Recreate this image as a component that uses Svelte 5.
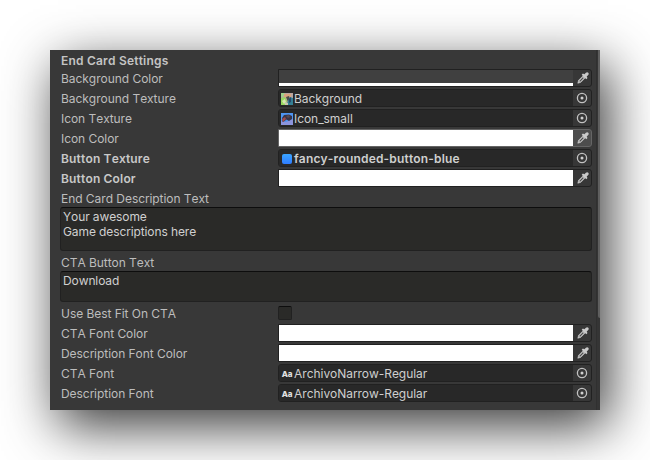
<script>
  const topRows = [
    { label: 'Background Color', kind: 'color', color: '#404040', alpha: true },
    { label: 'Background Texture', kind: 'object', icon: 'scene', value: 'Background' },
    { label: 'Icon Texture', kind: 'object', icon: 'bird', value: 'Icon_small' },
    { label: 'Icon Color', kind: 'color', color: '#ffffff', active: true },
    { label: 'Button Texture', kind: 'object', icon: 'button', value: 'fancy-rounded-button-blue', bold: true },
    { label: 'Button Color', kind: 'color', color: '#ffffff', bold: true }
  ];
  const bottomRows = [
    { label: 'Use Best Fit On CTA', kind: 'toggle' },
    { label: 'CTA Font Color', kind: 'color', color: '#ffffff' },
    { label: 'Description Font Color', kind: 'color', color: '#ffffff' },
    { label: 'CTA Font', kind: 'object', icon: 'font', value: 'ArchivoNarrow-Regular' },
    { label: 'Description Font', kind: 'object', icon: 'font', value: 'ArchivoNarrow-Regular' }
  ];
</script>

{#snippet icon(name)}
  <svg class="icon" viewBox="0 0 12 12">
    {#if name === 'scene'}
      <rect width="12" height="12" fill="#b9a6a0" />
      <path d="M0 0h4L2 4H0z" fill="#9ed089" />
      <path d="M3 1h7v3L6 5 3 4z" fill="#d9a37c" />
      <path d="M0 5l4-1 2 4-2 4H0z" fill="#96d860" />
      <path d="M1 8l3-2 1 3-2 2z" fill="#d8e8b0" />
      <path d="M5 4l3-1 1 3-2 3z" fill="#4b4e48" />
      <path d="M9 4l3 1v7H5l2-4z" fill="#347f94" />
      <path d="M8 6l2-2v5l-2 1z" fill="#29486a" />
      <path d="M4 9l3 1v2H4z" fill="#c9c8ae" />
    {:else if name === 'bird'}
      <rect width="12" height="12" fill="#4e95f2" />
      <path d="M0 8l5 1 7-3v6H0z" fill="#8c94dd" />
      <path d="M1 5l2-3 5-.5 3 1.5v3L8 8 5.500 6.500 3 8.500 1.500 9z" fill="#39364a" />
      <path d="M1 6l3-2 1 2-3 3z" fill="#a34b4b" />
      <path d="M5 3l3-1 1 2-2 1z" fill="#5b4a50" />
    {:else if name === 'button'}
      <defs>
        <linearGradient id="blue" x2="0" y2="1">
          <stop stop-color="#3aa5ff" /><stop offset="1" stop-color="#2f7cff" />
        </linearGradient>
      </defs>
      <rect x="1" y="1" width="10" height="10" rx="2" fill="url(#blue)" />
    {/if}
  </svg>
{/snippet}

{#snippet row(r)}
  <div class="row" class:bold={r.bold}>
    <span class="label">{r.label}</span>
    {#if r.kind === 'color'}
      <div class="field color" class:active={r.active}>
        <div class="swatch" style:background={r.color}>
          {#if r.alpha}<i></i>{/if}
        </div>
        <svg class="tool" viewBox="0 0 18 16">
          <path d="M4.800 13.200l.9-3 4.500-4.500 2.100 2.100-4.500 4.500z" fill="#c6c6c6" stroke="#c6c6c6" stroke-width=".7" stroke-linejoin="round" />
          <path d="M6.700 11.300L10.300 7.700" stroke="#4a4a4a" stroke-width="1.200" />
          <path d="M8.700 4.700l1.200-1.200 1.500.8 1.500-1.500q1.300-1.200 2.400-.1 1.100 1.100-.1 2.400l-1.500 1.500.8 1.500-1.200 1.200z" fill="#cacaca" />
        </svg>
      </div>
    {:else if r.kind === 'object'}
      <div class="field object">
        <div class="value">
          {#if r.icon === 'font'}<b class="aa">Aa</b>{:else}{@render icon(r.icon)}{/if}
          <span>{r.value}</span>
        </div>
        <svg class="tool" viewBox="0 0 18 16">
          <circle cx="9" cy="8" r="4.600" fill="none" stroke="#c2c2c2" stroke-width="1.300" />
          <circle cx="9" cy="8" r="1.500" fill="#d0d0d0" />
        </svg>
      </div>
    {:else}
      <div class="toggle"></div>
    {/if}
  </div>
{/snippet}

<main>
  <section class="panel">
    <div class="content">
      <h2>End Card Settings</h2>
      {#each topRows as r}{@render row(r)}{/each}
      <span class="label">End Card Description Text</span>
      <div class="area tall">Your awesome<br />Game descriptions here</div>
      <span class="label">CTA Button Text</span>
      <div class="area">Download</div>
      {#each bottomRows as r}{@render row(r)}{/each}
    </div>
    <div class="scroll"><div class="thumb"></div></div>
  </section>
</main>

<style>
  :global(body) { background: #fff; }
  main {
    box-sizing: border-box;
    width: 650px;
    height: 460px;
    padding: 50px;
    overflow: hidden;
    font: 12px/18px Inter, sans-serif;
    font-kerning: none;
    letter-spacing: -0.05px;
    color: #bdbdbd;
  }
  .panel {
    display: flex;
    width: 550px;
    height: 360px;
    background: #383838;
    box-shadow: 8px 16px 50px rgba(0, 0, 0, 0.79);
  }
  .content { width: 532px; padding: 0 4px 0 10px; }
  h2 {
    height: 19px;
    margin: 0 0 0 1px;
    font-size: 12px;
    line-height: 22px;
    font-weight: 600;
    letter-spacing: 0.2px;
    color: #c4c4c4;
  }
  .row { display: flex; height: 20px; }
  .bold { font-weight: 600; letter-spacing: 0.17px; color: #c8c8c8; }
  .label {
    display: block;
    width: 217px;
    height: 18px;
    padding-left: 1px;
    line-height: 20px;
    white-space: nowrap;
  }
  .row .label { flex: none; }
  .field {
    display: flex;
    box-sizing: border-box;
    width: 314px;
    height: 18px;
    border: 1px solid #212121;
    border-radius: 3px;
    overflow: hidden;
    background: #373737;
  }
  .color { border-radius: 0 3px 3px 0; }
  .active { border-color: #656565; background: #4d4d4d; }
  .swatch { display: flex; align-items: flex-end; width: 294px; }
  .swatch i { width: 100%; height: 3px; background: #fff; }
  .tool { width: 18px; height: 16px; flex: none; }
  .value {
    display: flex;
    align-items: center;
    gap: 1px;
    box-sizing: border-box;
    width: 294px;
    padding-left: 2px;
    background: #282828;
    color: #cfcfcf;
    white-space: nowrap;
  }
  .value span { line-height: 18px; height: 16px; }
  .icon { width: 12px; height: 12px; margin-top: 2px; }
  .aa {
    width: 12px;
    font-size: 8px;
    line-height: 10px;
    font-weight: 800;
    letter-spacing: -0.2px;
    padding-top: 2px;
    text-align: center;
    color: #e0e0e0;
  }
  .area {
    box-sizing: border-box;
    width: 532px;
    height: 31px;
    margin-bottom: 2px;
    padding: 1px 2px 0;
    border: 1px solid #212121;
    border-top-color: #0d0d0d;
    border-radius: 3px;
    background: #2a2a28;
    color: #d0d0d0;
    line-height: 15px;
    letter-spacing: -0.1px;
  }
  .tall { height: 44px; }
  .toggle {
    box-sizing: border-box;
    width: 14px;
    height: 14px;
    margin-top: 2px;
    border: 1px solid #212121;
    border-top-color: #0d0d0d;
    border-radius: 2px;
    background: #2a2a28;
  }
  .scroll {
    display: flex;
    justify-content: flex-end;
    box-sizing: border-box;
    width: 4px;
    border-left: 1px solid #303030;
    background: #353535;
  }
  .thumb { width: 2px; height: 268px; background: #5f5f5f; border-radius: 0 0 0 2px; }
</style>
